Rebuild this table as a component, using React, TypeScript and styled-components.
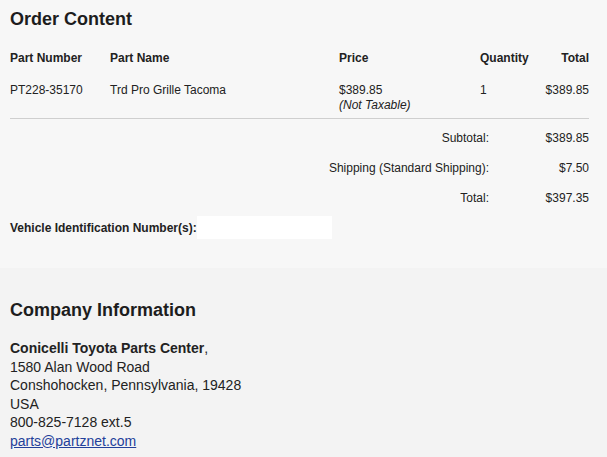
import styled, { createGlobalStyle } from "styled-components";

const GlobalStyle = createGlobalStyle`
  html, body {
    margin: 0;
    padding: 0;
    background: #f3f3f3;
  }
  body {
    font-family: "Liberation Sans", Arial, Helvetica, sans-serif;
    color: #222;
  }
`;

const PageLayout = styled.div`
  display: flex;
  flex-direction: column;
  min-height: 100vh;
`;

const OrderSection = styled.section`
  background: #f7f7f7;
  padding: 8px 18px 29px 10px;
`;

const CompanySection = styled.section`
  flex: 1;
  background: #f3f3f3;
  padding: 31px 10px 10px;
`;

const SectionTitle = styled.h2`
  margin: 0;
  font-size: 18px;
  line-height: 22px;
  font-weight: 700;
  color: #1d1d1d;
`;

const ItemRow = styled.div<{ $header?: boolean }>`
  display: grid;
  grid-template-columns: 100px 229px 141px 1fr auto;
  font-size: 12px;
  line-height: ${(p) => (p.$header ? "16px" : "15px")};
  font-weight: ${(p) => (p.$header ? 700 : 400)};
  padding: ${(p) => (p.$header ? "20px 0 8px" : "9px 0 5px")};
  border-bottom: ${(p) => (p.$header ? "none" : "1px solid #cfcfcf")};
`;

const Cell = styled.div<{ $right?: boolean }>`
  text-align: ${(p) => (p.$right ? "right" : "left")};
`;

const Note = styled.div`
  font-style: italic;
`;

const TotalsLayout = styled.div`
  display: flex;
  flex-direction: column;
  margin-top: 4px;
`;

const TotalRow = styled.div`
  display: grid;
  grid-template-columns: 1fr 100px;
  font-size: 12px;
  line-height: 16px;
  padding: 7px 0;
  text-align: right;
`;

const VinRow = styled.div`
  display: flex;
  align-items: center;
  margin-top: 3px;
  font-size: 12px;
  font-weight: 700;
`;

const VinBox = styled.div`
  width: 135px;
  height: 23px;
  background: #ffffff;
`;

const AddressBlock = styled.div`
  margin-top: 18px;
  font-size: 14px;
  line-height: 18.5px;
  color: #222;
`;

const CompanyName = styled.strong`
  font-weight: 700;
`;

const MailLink = styled.a`
  color: #23409a;
  text-decoration: underline;
`;

const App = () => {
  return (
    <>
      <GlobalStyle />
      <PageLayout>
        <OrderSection>
          <SectionTitle>Order Content</SectionTitle>
          <ItemRow $header>
            <Cell>Part Number</Cell>
            <Cell>Part Name</Cell>
            <Cell>Price</Cell>
            <Cell>Quantity</Cell>
            <Cell $right>Total</Cell>
          </ItemRow>
          <ItemRow>
            <Cell>PT228-35170</Cell>
            <Cell>Trd Pro Grille Tacoma</Cell>
            <Cell>
              $389.85
              <Note>(Not Taxable)</Note>
            </Cell>
            <Cell>1</Cell>
            <Cell $right>$389.85</Cell>
          </ItemRow>
          <TotalsLayout>
            <TotalRow>
              <span>Subtotal:</span>
              <span>$389.85</span>
            </TotalRow>
            <TotalRow>
              <span>Shipping (Standard Shipping):</span>
              <span>$7.50</span>
            </TotalRow>
            <TotalRow>
              <span>Total:</span>
              <span>$397.35</span>
            </TotalRow>
          </TotalsLayout>
          <VinRow>
            Vehicle Identification Number(s):
            <VinBox />
          </VinRow>
        </OrderSection>
        <CompanySection>
          <SectionTitle>Company Information</SectionTitle>
          <AddressBlock>
            <CompanyName>Conicelli Toyota Parts Center</CompanyName>,
            <br />
            1580 Alan Wood Road
            <br />
            Conshohocken, Pennsylvania, 19428
            <br />
            USA
            <br />
            800-825-7128 ext.5
            <br />
            <MailLink href="mailto:parts@partznet.com">parts@partznet.com</MailLink>
          </AddressBlock>
        </CompanySection>
      </PageLayout>
    </>
  );
};

export default App;
